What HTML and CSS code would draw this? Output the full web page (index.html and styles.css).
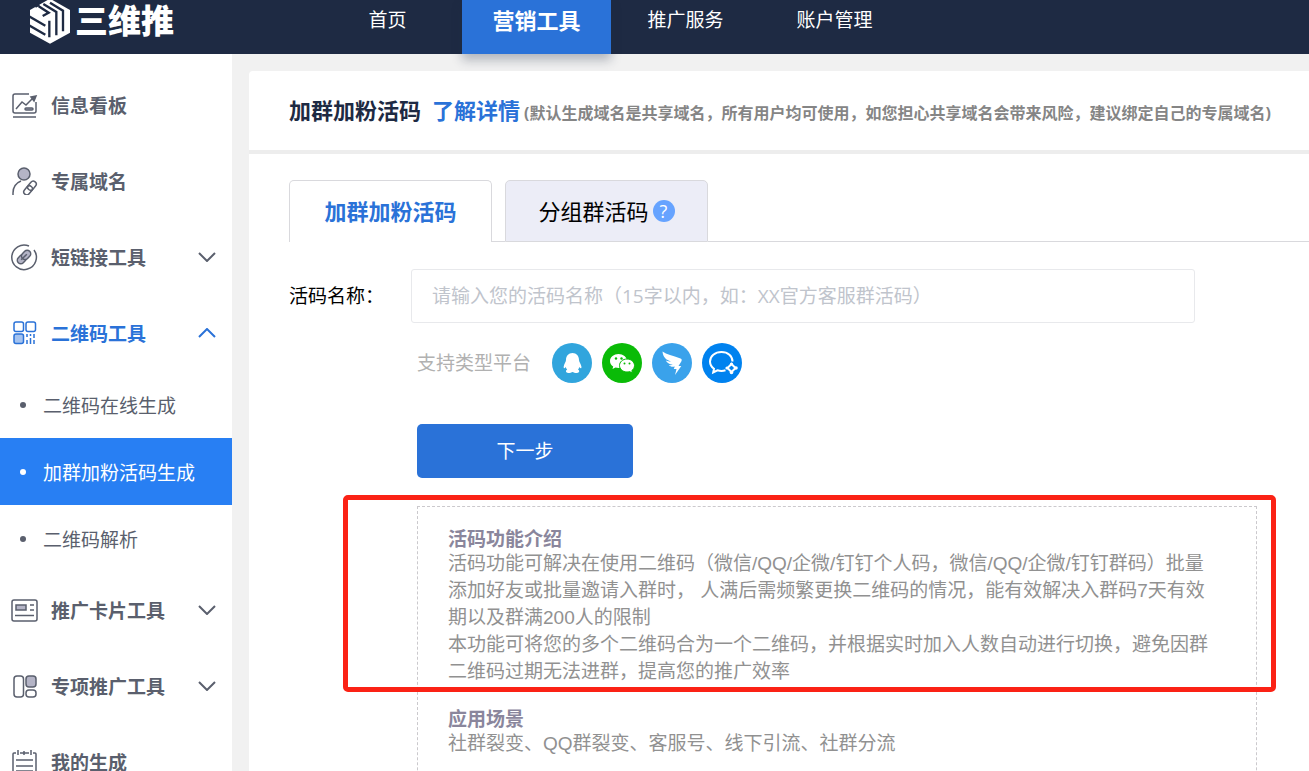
FILE: index.html
```html
<!DOCTYPE html>
<html lang="zh-CN">
<head>
    <meta charset="UTF-8">
    <title>三维推 - 加群加粉活码</title>
    <link rel="stylesheet" href="styles.css">
</head>
<body>

<header class="header">
    <a class="logo" href="#">
        <svg class="logo-mark" viewBox="90 -6 120 138">
            <path fill="#fff" d="M150-4 210 30V98L150 131 90 98V30z"/>
            <g fill="none" stroke="#1e2a43" stroke-width="7">
                <path d="M87 49 136 77M87 76 136 104M148 62V112"/>
                <path d="M106 20 118 14M116 19 146 38 128 48M130 12 169 36V106M150 8 189 32V94"/>
            </g>
        </svg>
        <span>三维推</span>
    </a>
    <nav class="nav">
        <a href="#">首页</a>
        <a href="#" class="active">营销工具</a>
        <a href="#">推广服务</a>
        <a href="#">账户管理</a>
    </nav>
</header>

<div class="layout">
    <aside class="sidebar">
        <a class="menu-item" href="#">
            <svg class="icon" viewBox="0 0 28 28">
                <path d="M19 3H5a2 2 0 0 0-2 2v15a2 2 0 0 0 2 2h19a2 2 0 0 0 2-2v-9M3 26h23"/>
                <path d="M6 18 12 11l4 3 7-7"/>
                <path class="solid" d="M21 6 26 5l-2 5z"/>
                <rect class="tint" x="15" y="17" width="8" height="2" rx="1"/>
            </svg>
            <span>信息看板</span>
        </a>
        <a class="menu-item" href="#">
            <svg class="icon" viewBox="0 0 28 28">
                <circle class="tint" cx="14" cy="7" r="6"/>
                <path d="M3 28v-2c0-6 3-10 8-12"/>
                <g transform="rotate(-50 20 21)">
                    <rect x="12" y="18" width="10" height="6" rx="3"/>
                    <rect x="18" y="18" width="10" height="6" rx="3"/>
                </g>
            </svg>
            <span>专属域名</span>
        </a>
        <a class="menu-item" href="#">
            <svg class="icon" viewBox="0 0 28 28">
                <path d="M19 3A12.300 12.300 0 1 0 24 7"/>
                <g transform="rotate(-45 14 14)">
                    <rect class="tint" x="6" y="10.500" width="10" height="7" rx="3.500"/>
                    <rect class="tint" x="12" y="10.500" width="10" height="7" rx="3.500"/>
                    <path d="M10 14h8"/>
                </g>
            </svg>
            <span>短链接工具</span>
            <svg class="arrow" viewBox="0 0 18 10"><path d="M1 1l8 8 8-8"/></svg>
        </a>
        <a class="menu-item open" href="#">
            <svg class="icon" viewBox="0 0 28 28">
                <rect x="4" y="3" width="9.500" height="9.500" rx="2"/>
                <rect x="16" y="3" width="9.500" height="9.500" rx="2"/>
                <rect class="tint" x="4" y="15" width="9.500" height="9.500" rx="2"/>
                <path d="M17 15v3M17 21v4M20.500 15v2M20.500 19v6M24 15v4M24 21v4"/>
            </svg>
            <span>二维码工具</span>
            <svg class="arrow" viewBox="0 0 18 10"><path d="M1 9l8-8 8 8"/></svg>
        </a>
        <ul class="submenu">
            <li><a href="#">二维码在线生成</a></li>
            <li><a href="#" class="active">加群加粉活码生成</a></li>
            <li><a href="#">二维码解析</a></li>
        </ul>
        <a class="menu-item" href="#">
            <svg class="icon" viewBox="0 0 28 28">
                <rect x="2" y="4" width="25" height="21" rx="2"/>
                <rect class="tint" x="6" y="9" width="10" height="5"/>
                <path d="M20 9h4M20 14h4M5 19.500h19"/>
            </svg>
            <span>推广卡片工具</span>
            <svg class="arrow" viewBox="0 0 18 10"><path d="M1 1l8 8 8-8"/></svg>
        </a>
        <a class="menu-item" href="#">
            <svg class="icon" viewBox="0 0 28 28">
                <rect x="4" y="4" width="9.500" height="21" rx="3"/>
                <rect class="tint" x="16" y="4" width="10" height="11" rx="3"/>
                <rect x="16" y="18" width="10" height="7" rx="3"/>
            </svg>
            <span>专项推广工具</span>
            <svg class="arrow" viewBox="0 0 18 10"><path d="M1 1l8 8 8-8"/></svg>
        </a>
        <a class="menu-item" href="#">
            <svg class="icon" viewBox="0 0 28 28">
                <path d="M6 5H4a1 1 0 0 0-1 1v20h23V6a1 1 0 0 0-1-1h-2M10 5h9M8 2v5M21 2v5M14 3v4M6 12h17M6 18h17M6 23h17"/>
            </svg>
            <span>我的生成</span>
        </a>
    </aside>

    <main class="main">
        <div class="page-title">
            <h1>加群加粉活码</h1>
            <a href="#">了解详情</a>
            <small>(默认生成域名是共享域名，所有用户均可使用，如您担心共享域名会带来风险，建议绑定自己的专属域名)</small>
        </div>

        <div class="panel">
            <div class="tabs">
                <button type="button" class="tab active">加群加粉活码</button>
                <button type="button" class="tab">分组群活码<span class="help">?</span></button>
            </div>

            <form class="form">
                <div class="field">
                    <label for="code-name">活码名称：</label>
                    <input type="text" id="code-name" placeholder="请输入您的活码名称（15字以内，如：XX官方客服群活码）">
                </div>

                <div class="platforms">
                    <span>支持类型平台</span>
                    <svg viewBox="0 0 40 40">
                        <circle cx="20" cy="20" r="20" fill="#31a5dd"/>
                        <path fill="#fff" d="M20.500 10c-4 0-6.500 3-6.500 7 0 2-2 4-2.300 6.500-.2 2 .6 2.500 2 .5.300 1 .8 2 1.500 2.600-2 1-1.500 3.400 1 3.400 2 0 3.500-.5 4.300-1 1 .5 2.300 1 4.500 1 2.500 0 3-2.400 1-3.400.6-.6 1-1.500 1.400-2.600 1.300 2 2.300 1.500 2-.5C29 21 27 19 27 17c0-4-2.500-7-6.500-7z"/>
                    </svg>
                    <svg viewBox="0 0 40 40">
                        <circle cx="20" cy="20" r="20" fill="#0abb07"/>
                        <path fill="#fff" d="M16.500 11C12 11 8 14 8 18c0 2.300 1.200 4.200 3.200 5.600L10.500 26l3-1.500c1 .3 2 .5 3 .5C21 25 25 22 25 18s-4-7-8.500-7z"/>
                        <path fill="#fff" stroke="#0abb07" d="M25 16c-4.300 0-7.500 3-7.500 6.500S20.700 29 25 29c1 0 1.800-.1 2.600-.4l2.900 1.500-.7-2.500c1.700-1.200 2.700-3 2.700-5.100 0-3.500-3.200-6.500-7.500-6.500z"/>
                        <g fill="#0abb07"><circle cx="14" cy="15.500" r="1.200"/><circle cx="19.500" cy="15.500" r="1.200"/><circle cx="22.500" cy="20.500" r="1"/><circle cx="27.500" cy="20.500" r="1"/></g>
                    </svg>
                    <svg viewBox="0 0 40 40">
                        <circle cx="20" cy="20" r="20" fill="#3aa2eb"/>
                        <path fill="#fff" d="M10.500 8.500c4 3 10 4 18 7 1.500.6 1.500 1.600.8 3L26.500 23h2.800L23 32l1.500-6h-2.700l1-2.500c-2.500.6-4.500.2-6-1.500 1.500.2 2.800.2 4-.2-3.500-.5-6-2-7-4.300 2 .8 3.500 1 5.200 1-5-1.500-8-4.500-8.500-10z"/>
                    </svg>
                    <svg viewBox="0 0 40 40">
                        <circle cx="20" cy="20" r="20" fill="#0082ef"/>
                        <g fill="none" stroke="#fff" stroke-width="2">
                            <path d="M30.500 18.500C30.500 13 26 9 19.500 9S8 13 8 18.500c0 3 1.500 5.500 4 7.300l-.8 3.700 4.300-2.200c2.500.8 5.500.8 8 0"/>
                            <path d="M29.500 21l4 4-4 4-4-4z"/>
                        </g>
                        <g fill="#fff"><circle cx="29.500" cy="21" r="1.600"/><circle cx="34" cy="25" r="1.800"/><circle cx="29.500" cy="29.500" r="1.800"/><circle cx="25" cy="25" r="1.600"/></g>
                    </svg>
                </div>

                <button type="button" class="next">下一步</button>
            </form>

            <div class="intro">
                <section class="marked">
                    <h2>活码功能介绍</h2>
                    <p>活码功能可解决在使用二维码（微信/QQ/企微/钉钉个人码，微信/QQ/企微/钉钉群码）批量添加好友或批量邀请入群时， 人满后需频繁更换二维码的情况，能有效解决入群码7天有效期以及群满200人的限制</p>
                    <p>本功能可将您的多个二维码合为一个二维码，并根据实时加入人数自动进行切换，避免因群二维码过期无法进群，提高您的推广效率</p>
                </section>
                <section>
                    <h2>应用场景</h2>
                    <p>社群裂变、QQ群裂变、客服号、线下引流、社群分流</p>
                </section>
            </div>
        </div>
    </main>
</div>

</body>
</html>
```
FILE: styles.css
```css
* {
    box-sizing: border-box;
}

html,
body {
    height: 100%;
}

body {
    display: flex;
    flex-direction: column;
    margin: 0;
    overflow: hidden;
    background: #f1f1f1;
    color: #000;
    font-family: "Open Sans", "Noto Sans CJK SC", sans-serif;
    font-size: 19px;
}

a {
    color: inherit;
    text-decoration: none;
}

h1,
h2,
p,
ul {
    margin: 0;
    padding: 0;
}

button,
input {
    font: inherit;
}

/* header */
.header {
    display: flex;
    flex-shrink: 0;
    height: 54px;
    background: #1e2a43;
    color: #fff;
}

.logo {
    display: flex;
    gap: 5px;
    width: 313px;
    height: 44px;
    padding-left: 30px;
    font-size: 33px;
    font-weight: 900;
    line-height: 42px;
}

.logo-mark {
    width: 40px;
    height: 46px;
    margin-top: -2px;
}

.nav {
    display: flex;
}

.nav a {
    width: 149px;
    line-height: 40px;
    text-align: center;
}

.nav .active {
    background: #2a72d8;
    box-shadow: 0 6px 10px rgba(30, 42, 67, 0.3);
    font-size: 22px;
    font-weight: bold;
}

.layout {
    display: flex;
    flex: 1;
    min-height: 0;
}

/* sidebar */
.sidebar {
    flex: 0 0 232px;
    padding-top: 13px;
    overflow: hidden;
    background: #fff;
    color: #5a5f6d;
}

.menu-item {
    display: flex;
    align-items: center;
    height: 76px;
    padding: 0 16px 0 10px;
    font-weight: bold;
}

.menu-item.open {
    color: #2a72d8;
}

.icon {
    width: 28px;
    height: 28px;
    margin-right: 13px;
}

.icon,
.arrow {
    fill: none;
    stroke: currentColor;
    stroke-width: 1.5;
}

.icon .tint {
    fill: #b4b4c6;
}

.icon .solid {
    fill: currentColor;
}

.open .tint {
    fill: #a5c3ef;
}

.arrow {
    width: 18px;
    height: 10px;
    margin-left: auto;
    stroke-width: 2;
}

.submenu {
    list-style: none;
}

.submenu a {
    display: flex;
    align-items: center;
    height: 67px;
    padding-left: 20px;
}

.submenu a::before {
    content: "";
    width: 6px;
    height: 6px;
    margin-right: 17px;
    border-radius: 50%;
    background: currentColor;
}

.submenu .active {
    background: #287ff3;
    color: #fff;
}

/* content */
.main {
    display: flex;
    flex: 1;
    flex-direction: column;
    min-width: 0;
    margin: 17px 0 0 17px;
}

.page-title {
    display: flex;
    align-items: baseline;
    flex-shrink: 0;
    height: 83px;
    padding: 23px 0 0 40px;
    border-bottom: 4px solid #ededed;
    border-radius: 4px 0 0 0;
    background: #fff;
    line-height: 32px;
    white-space: nowrap;
}

.page-title h1 {
    margin-right: 11px;
    color: #1e2a43;
    font-size: 22px;
}

.page-title a {
    margin-right: 4px;
    color: #2a72d8;
    font-size: 22px;
    font-weight: bold;
}

.page-title small {
    color: #858585;
    font-size: 16px;
    font-weight: bold;
}

.panel {
    flex: 1;
    padding: 26px 0 0 40px;
    background: #fff;
}

.tabs {
    display: flex;
    height: 62px;
}

.tabs::after {
    content: "";
    flex: 1;
    border-bottom: 1px solid #d9d9dd;
}

.tab {
    display: flex;
    align-items: center;
    justify-content: center;
    width: 203px;
    padding: 0 0 3px;
    border: 1px solid #d9d9dd;
    border-radius: 5px 5px 0 0;
    background: #ecedf7;
    font-size: 22px;
}

.tab.active {
    position: relative;
    margin-right: 13px;
    border-bottom: 0;
    background: #fff;
    color: #2a72d8;
    font-weight: bold;
}

/* rule between the two tabs */
.tab.active::after {
    content: "";
    position: absolute;
    left: 100%;
    bottom: 0;
    width: 14px;
    height: 1px;
    background: #d9d9dd;
}

.help {
    width: 22px;
    height: 22px;
    margin: 3px 0 0 4px;
    border-radius: 50%;
    background: #66a3ff;
    color: #fff;
    font-size: 18px;
    line-height: 22px;
}

.field {
    display: flex;
    align-items: center;
    margin: 27px 114px 20px 0;
}

.field label {
    width: 122px;
    padding-bottom: 2px;
}

.field input {
    flex: 1;
    min-width: 0;
    height: 54px;
    padding: 0 20px;
    border: 1px solid #e8e9ec;
    border-radius: 3px;
}

.field input::placeholder {
    color: #c0c4cc;
}

.platforms {
    display: flex;
    align-items: center;
    gap: 10px;
    margin-left: 128px;
    color: #b1b1b1;
}

.platforms span {
    margin-right: 11px;
    padding-bottom: 2px;
}

.platforms svg {
    width: 40px;
    height: 40px;
}

.next {
    display: block;
    width: 216px;
    height: 54px;
    margin: 41px 0 28px 128px;
    padding: 0 0 3px;
    border: 0;
    border-radius: 5px;
    background: #2a72d8;
    color: #fff;
}

.intro {
    height: 400px;
    margin: 0 52px 0 128px;
    padding: 22px 40px 0 30px;
    border: 1px dashed #cbc9cd;
    color: #919191;
    font-family: "Liberation Sans", "Noto Sans CJK SC", sans-serif;
    line-height: 27px;
}

.intro section {
    margin-bottom: 24px;
}

.intro h2 {
    color: #8a869c;
    font-size: 19px;
    line-height: 21px;
}

.marked {
    position: relative;
}

.marked::after {
    content: "";
    position: absolute;
    inset: -34px -60px -7px -105px;
    border: 5px solid #fb2215;
    border-radius: 5px;
}
```
